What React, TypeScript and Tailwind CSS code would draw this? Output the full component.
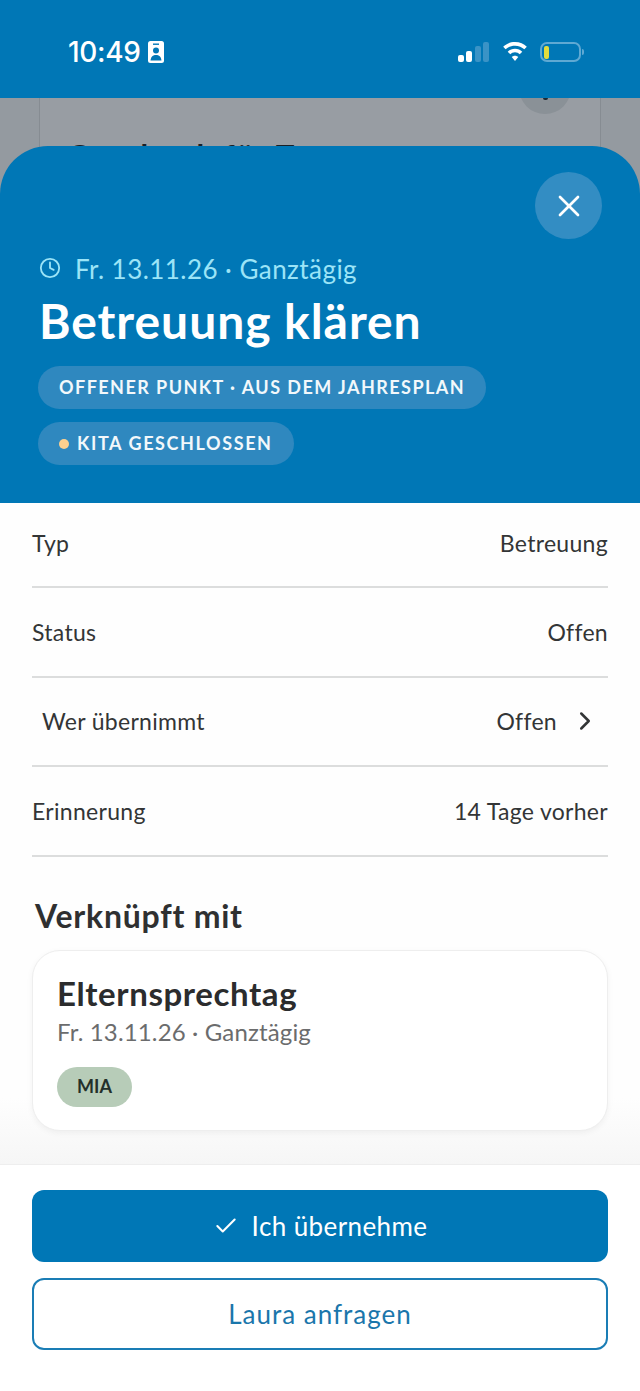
import { Check, ChevronRight, Clock, X } from 'lucide-react';

const ROWS = [
    { label: 'Typ', value: 'Betreuung', height: 'h-[85px] pb-[3px]' },
    { label: 'Status', value: 'Offen', height: 'h-[89.5px]' },
    { label: 'Wer übernimmt', value: 'Offen', height: 'h-[89.5px]', link: true },
    { label: 'Erinnerung', value: '14 Tage vorher', height: 'h-[89.5px]' },
];

function StatusBar() {
    return (
        <div className="relative z-10 flex h-[98px] items-start justify-between bg-[#0077b6] pl-[68px] pr-[56px] pt-[36px]">
            <div className="flex items-center gap-[6px] text-white">
                <span className="font-['Inter',sans-serif] text-[28px] leading-[32px] font-medium tracking-[-0.3px]">10:49</span>
                <svg width="18" height="24" viewBox="0 0 18 24" aria-hidden="true">
                    <rect x="1" y="1" width="16" height="22" rx="2.5" fill="#fff" />
                    <rect x="6" y="3.5" width="6" height="1.4" fill="#0077b6" />
                    <circle cx="9" cy="10.5" r="3" fill="#0077b6" />
                    <path d="M3.5 20.5c.4-3.8 2.5-5.5 5.500-5.500s5.100 1.700 5.500 5.500z" fill="#0077b6" />
                </svg>
            </div>
            <div className="flex items-center pt-[6px]">
                <svg width="32" height="20" viewBox="0 0 32 20" aria-hidden="true">
                    <rect x="0" y="13" width="6" height="7" rx="2" fill="#fff" />
                    <rect x="8" y="9" width="6" height="11" rx="2" fill="#fff" />
                    <rect x="17" y="4" width="6" height="16" rx="2" fill="#3a93c6" />
                    <rect x="25" y="0" width="6" height="20" rx="2" fill="#3a93c6" />
                </svg>
                <svg className="ml-[12px]" width="26" height="20" viewBox="0 0 28 22" aria-hidden="true">
                    <path d="M14 0C8.700 0 4.200 2 1 5.300l2.700 2.800C6.300 5.500 9.900 4 14 4s7.700 1.500 10.300 4.100L27 5.300C23.800 2 19.300 0 14 0z" fill="#fff" />
                    <path d="M14 7.500c-3.200 0-6 1.200-8 3.300l2.800 2.800c1.300-1.400 3.100-2.200 5.200-2.200s3.900.8 5.200 2.200l2.800-2.800c-2-2.100-4.800-3.300-8-3.300z" fill="#fff" />
                    <path d="M14 15c-1.500 0-2.800.6-3.600 1.500L14 21l3.600-4.500C16.800 15.600 15.500 15 14 15z" fill="#fff" />
                </svg>
                <div className="ml-[12px] flex items-center gap-[1px]">
                    <div className="flex h-[20px] w-[41px] items-center rounded-[7px] border-2 border-[#5fa9d3] pl-[2px]">
                        <div className="h-[13px] w-[5px] rounded-[2px] bg-[#e3dc3c]" />
                    </div>
                    <div className="h-[6px] w-[2px] rounded-r-sm bg-[#5fa9d3]" />
                </div>
            </div>
        </div>
    );
}

function Backdrop() {
    return (
        <div className="absolute inset-x-0 top-[98px] h-[120px] overflow-hidden bg-[#949aa0]">
            <div className="relative mx-[39px] h-[120px] border-x border-[#868c92] bg-[#989da3]">
                <div className="absolute right-[29px] top-[-36px] h-[52px] w-[52px] rounded-full bg-[#8a9197]" />
                <div className="absolute right-[52px] top-0 h-[2px] w-[5px] rounded-b-full bg-[#1a2a35]" />
                <div className="absolute left-[27px] top-[38px] font-['Lato',sans-serif] text-[31px] leading-[38px] font-bold tracking-[1.5px] text-[#1a2026]">
                    Geschenk für Tante
                </div>
            </div>
        </div>
    );
}

function Pill({ children }: { children: React.ReactNode }) {
    return (
        <div className="flex h-[43px] w-fit items-center rounded-full bg-[#2f88bf] px-[21px] font-['Lato',sans-serif] text-[18px] font-bold tracking-[1.45px] text-[#f2f8fb]">
            {children}
        </div>
    );
}

function Hero() {
    return (
        <div className="relative mt-[48px] h-[357px] rounded-t-[48px] bg-[#0077b6] px-[38px] pt-[106px]">
            <button className="absolute right-[38px] top-[26px] flex h-[67px] w-[67px] items-center justify-center rounded-full bg-[#338dc3] text-white">
                <X className="h-[36px] w-[36px]" strokeWidth={1.8} />
            </button>
            <div className="flex h-[34px] items-center gap-[14px] pl-[1px] text-[#9be4f7]">
                <Clock className="mb-[3px] h-[22px] w-[22px]" strokeWidth={2} />
                <span className="font-['Lato',sans-serif] text-[26px] leading-[34px] tracking-[0.45px]">Fr. 13.11.26 · Ganztägig</span>
            </div>
            <h1 className="mt-[5px] font-['Lato',sans-serif] text-[48px] leading-[60px] font-bold tracking-[0.95px] text-white pl-[1px]">Betreuung klären</h1>
            <div className="mt-[15px] flex flex-col gap-[13px]">
                <Pill>OFFENER PUNKT · AUS DEM JAHRESPLAN</Pill>
                <Pill>
                    <span className="mr-[8px] h-[10px] w-[10px] rounded-full bg-[#fcd08f]" />
                    <span className="tracking-[1.6px]">KITA GESCHLOSSEN</span>
                </Pill>
            </div>
        </div>
    );
}

function DetailRows() {
    return (
        <div className="mx-[32px] font-['Lato',sans-serif] text-[23px] leading-[30px] tracking-[0.3px] text-[#333536]">
            {ROWS.map(row => (
                <div
                    key={row.label}
                    className={`flex items-center justify-between border-b-2 border-[#dcdddd] ${row.height} ${row.link ? 'pl-[10px] pr-[8px]' : ''}`}
                >
                    <span>{row.label}</span>
                    <span className="flex items-center gap-[13px]">
                        {row.value}
                        {row.link && <ChevronRight className="h-[30px] w-[30px]" strokeWidth={2} />}
                    </span>
                </div>
            ))}
        </div>
    );
}

function LinkedCard() {
    return (
        <div className="mx-[32px] mt-[12px] h-[181px] rounded-[28px] border border-[#eeeeee] bg-white px-[24px] pt-[22px] shadow-[0_2px_6px_rgba(0,0,0,0.05)]">
            <div className="font-['Lato',sans-serif] text-[33px] leading-[40px] font-bold tracking-[0.6px] text-[#2b2c2d]">Elternsprechtag</div>
            <div className="mt-[1px] font-['Lato',sans-serif] text-[24px] leading-[36px] tracking-[0.15px] text-[#6b6c6d]">Fr. 13.11.26 · Ganztägig</div>
            <div className="mt-[17px] flex h-[40px] w-[75px] items-center justify-center rounded-full bg-[#b7ccb8] font-['Lato',sans-serif] text-[18px] font-bold text-[#24302a]">
                MIA
            </div>
        </div>
    );
}

function Footer() {
    return (
        <div className="flex flex-1 flex-col gap-[16px] border-t border-[#eeeeee] bg-white px-[32px] pt-[25px]">
            <button className="flex h-[72px] items-center justify-center gap-[13px] rounded-[12px] bg-[#0077b6] font-['Lato',sans-serif] text-[26px] tracking-[0.4px] text-white">
                <Check className="h-[26px] w-[26px]" strokeWidth={1.9} />
                Ich übernehme
            </button>
            <button className="flex h-[72px] items-center justify-center rounded-[12px] border-2 border-[#1a7db5] bg-white font-['Lato',sans-serif] text-[26px] tracking-[1px] text-[#1a76ab]">
                Laura anfragen
            </button>
        </div>
    );
}

export default function App() {
    return (
        <div className="relative flex h-[1391px] w-[640px] flex-col overflow-hidden bg-white">
            <StatusBar />
            <Backdrop />
            <Hero />
            <div className="relative flex h-[661px] flex-col bg-gradient-to-b from-[#fefefe] from-90% to-[#f6f6f6]">
                <DetailRows />
                <h2 className="ml-[35px] mt-[37px] font-['Lato',sans-serif] text-[32px] leading-[44px] font-bold tracking-[0.77px] text-[#2f3031]">Verknüpft mit</h2>
                <LinkedCard />
            </div>
            <Footer />
        </div>
    );
}
